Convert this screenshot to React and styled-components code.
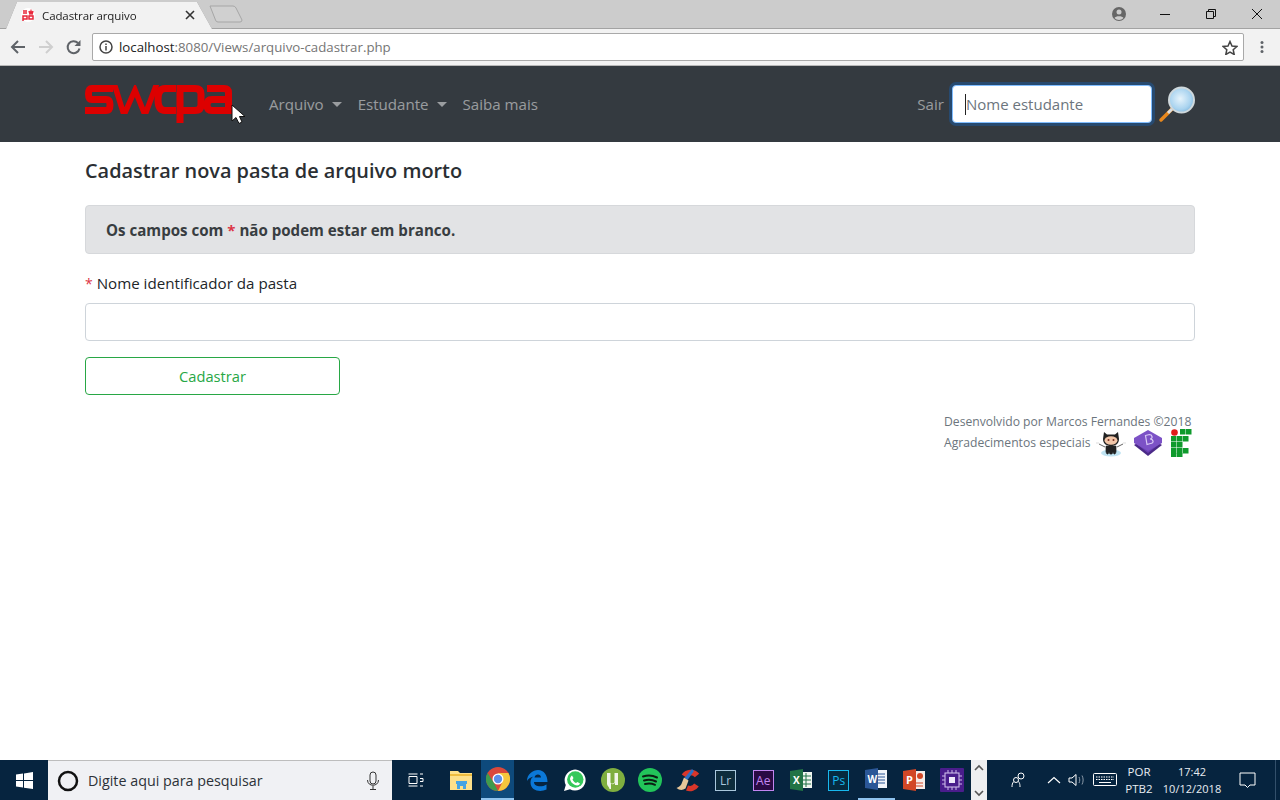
import React from "react";
import styled, { createGlobalStyle } from "styled-components";

const GlobalStyle = createGlobalStyle`
  html, body { margin: 0; padding: 0; height: 100%; background: #fff; }
  body { font-family: "Open Sans", "Noto Sans", sans-serif; color: #212529; }
  #root { height: 100%; }
  * { box-sizing: border-box; }
`;

const Page = styled.div`
  width: 1280px;
  height: 800px;
  display: flex;
  flex-direction: column;
  overflow: hidden;
  position: relative;
`;

/* browser chrome */
const TabStrip = styled.div`
  height: 29px;
  background: #cccccc;
  border-bottom: 1px solid #a3a3a3;
  display: flex;
  align-items: flex-end;
  padding-left: 6px;
  flex: none;
`;

const TabOutline = styled.div`
  margin-bottom: -1px;
  filter: drop-shadow(0 0 0.6px #777);
`;

const Tab = styled.div`
  width: 206px;
  height: 28px;
  background: #f2f2f2;
  clip-path: polygon(0 100%, 11px 1px, 191px 1px, 206px 100%);
  display: flex;
  align-items: center;
  padding: 0 17px 0 15px;
  font-size: 11.5px;
  color: #222;
`;

const TabTitle = styled.span`
  margin-left: 7px;
  flex: 1;
  letter-spacing: -0.1px;
`;

const NewTab = styled.svg`
  width: 38px;
  height: 20px;
  margin: 0 0 3px -3px;
`;

const WindowBtns = styled.div`
  margin-left: auto;
  align-self: stretch;
  display: flex;
  align-items: center;
`;

const WinBtn = styled.div`
  width: 46px;
  height: 27px;
  display: flex;
  align-items: center;
  justify-content: center;
`;

const Toolbar = styled.div`
  height: 37px;
  background: #f2f2f2;
  display: flex;
  align-items: center;
  flex: none;
  border-bottom: 1px solid #b8b8b8;
`;

const NavIcons = styled.div`
  width: 92px;
  display: flex;
  align-items: center;
  padding-left: 10px;
  gap: 12px;
`;

const Omnibox = styled.div`
  width: 1152px;
  height: 28px;
  background: #fff;
  border: 1px solid #a9a9a9;
  border-radius: 2px;
  display: flex;
  align-items: center;
  padding: 0 5px 0 6px;
  font-size: 13.25px;
  color: #757575;
`;

const UrlText = styled.span`
  margin-left: 6px;
  flex: 1;
`;

const UrlHost = styled.span`
  color: #222;
`;

const MenuDots = styled.div`
  flex: 1;
  display: flex;
  justify-content: center;
`;

/* site navbar */
const Navbar = styled.nav`
  height: 76px;
  background: #343a40;
  display: flex;
  align-items: center;
  padding: 0 85px;
  flex: none;
`;

const Brand = styled.svg`
  width: 150px;
  height: 44px;
  margin-right: 34px;
  flex: none;
`;

const NavLink = styled.a`
  color: rgba(255, 255, 255, 0.5);
  font-size: 15.1px;
  margin-right: ${(p) => p.$gap ?? 16}px;
  display: inline-flex;
  align-items: center;
`;

const Caret = styled.span`
  width: 0;
  height: 0;
  margin-left: 8px;
  border-top: 5px solid rgba(255, 255, 255, 0.5);
  border-left: 5px solid transparent;
  border-right: 5px solid transparent;
`;

const NavRight = styled.div`
  margin-left: auto;
  display: flex;
  align-items: center;
`;

const SearchInput = styled.div`
  width: 200px;
  height: 38px;
  margin: 0 5px 0 8px;
  background: #fff;
  border: 1px solid #80bdff;
  border-radius: 4px;
  box-shadow: 0 0 0 3px rgba(0, 123, 255, 0.25);
  display: flex;
  align-items: center;
  padding-left: 12px;
  font-size: 15px;
  color: #6c757d;
`;

const Cursor = styled.span`
  width: 1px;
  height: 21px;
  background: #222;
`;

const MousePointer = styled.svg`
  position: absolute;
  left: 231px;
  top: 104px;
`;

/* page content */
const Main = styled.main`
  flex: 1;
  padding: 16px 85px 0;
`;

const Title = styled.h1`
  margin: 0 0 21px;
  font-size: 19.9px;
  font-weight: 600;
  line-height: 26px;
  color: #2b2f33;
`;

const Alert = styled.div`
  height: 49px;
  background: #e2e3e5;
  border: 1px solid #d6d8db;
  border-radius: 4px;
  padding: 0 20px;
  display: flex;
  align-items: center;
  font-size: 15.1px;
  font-weight: 700;
  color: #383d41;
  white-space: pre;
`;

const Star = styled.span`
  color: #dc3545;
  font-size: ${(p) => (p.$bold ? 15 : 14)}px;
  font-weight: ${(p) => (p.$bold ? 700 : 400)};
`;

const Label = styled.label`
  display: block;
  margin: 17px 0 7px;
  font-size: 15.15px;
  line-height: 24px;
  white-space: pre;
`;

const TextInput = styled.div`
  height: 38px;
  background: #fff;
  border: 1px solid #ced4da;
  border-radius: 4px;
`;

const SubmitBtn = styled.button`
  display: block;
  width: 255px;
  height: 38px;
  margin-top: 16px;
  background: #fff;
  border: 1px solid #28a745;
  border-radius: 4px;
  color: #28a745;
  font: inherit;
  font-size: 14.7px;
`;

const Credits = styled.div`
  margin: 17px 3px 0 auto;
  width: 248px;
  font-size: 12.15px;
  line-height: 20px;
  color: #6c757d;
  white-space: nowrap;
`;

const ThanksRow = styled.div`
  display: flex;
  align-items: center;
  height: 24px;
  margin-top: -1px;
`;

const ThanksIcons = styled.div`
  margin-left: auto;
  display: flex;
  align-items: center;
  gap: 7px;
`;

/* windows taskbar */
const Taskbar = styled.div`
  height: 40px;
  background: #06243f;
  display: flex;
  align-items: stretch;
  flex: none;
`;

const StartBtn = styled.div`
  width: 48px;
  display: flex;
  align-items: center;
  justify-content: center;
`;

const SearchBox = styled.div`
  width: 344px;
  background: #f0f1f4;
  border-top: 1px solid #bdbdbd;
  display: flex;
  align-items: center;
  padding: 0 12px 0 9px;
  font-size: 14.3px;
  color: #2c3138;
`;

const SearchHint = styled.span`
  margin-left: 9px;
  flex: 1;
`;

const TaskIcons = styled.div`
  display: flex;
  align-items: stretch;
  padding-left: 4px;
  width: 579px;
`;

const TaskItem = styled.div`
  width: ${(p) => p.$w || 37.7}px;
  margin-left: ${(p) => p.$ml || 0}px;
  display: flex;
  align-items: center;
  justify-content: center;
  background: ${(p) => (p.$active ? "#0e4a7c" : "transparent")};
  border-bottom: ${(p) => (p.$open ? "2px solid #8fc3ee" : "none")};
`;

const Scroller = styled.div`
  width: 16px;
  background: #eeeff1;
  display: flex;
  flex-direction: column;
  align-items: center;
  justify-content: space-between;
  padding: 4px 0 3px;
`;

const Tray = styled.div`
  flex: 1;
  display: flex;
  align-items: center;
  color: #fff;
`;

const TrayText = styled.div`
  text-align: center;
  line-height: 17px;
  font-size: ${(p) => p.$size}px;
  width: ${(p) => p.$w}px;
  margin-left: 4px;
  flex: none;
  color: #e8edf2;
`;

const ShowDesktop = styled.div`
  margin-left: auto;
  width: 5px;
  align-self: stretch;
  border-left: 1px solid #33506b;
`;

const TileIcon = styled.div`
  width: 21px;
  height: 21px;
  display: flex;
  align-items: center;
  justify-content: center;
  border: 1.5px solid ${(p) => p.$c};
  background: ${(p) => p.$bg};
  color: ${(p) => p.$c};
  font-size: 12px;
`;

const Ic = ({ w = 24, h = 24, children, ...rest }) => (
  <svg width={w} height={h} viewBox={`0 0 ${w} ${h}`} {...rest}>
    {children}
  </svg>
);

const Favicon = () => (
  <Ic w={14} h={14}>
    <circle cx="7" cy="7" r="7" fill="#fff" />
    <path d="M2 3h4M2 5h4M8 3l1 3 1-3 1 3 1-3M2 8h4v3H2zM8 8h4v3H8zM2 11v2" stroke="#e8273a" strokeWidth="1.5" fill="none" />
  </Ic>
);

const SwcpaLogo = () => (
  <Brand viewBox="0 0 150 44">
    <defs>
      <clipPath id="logoBand">
        <rect x="0" y="3" width="150" height="29" />
      </clipPath>
    </defs>
    <g fill="none" stroke="#dd0000" strokeWidth="7">
      <path d="M28 6.500H7Q3.500 6.500 3.500 12T7 17.500H21Q25 17.500 25 23T21 28.500H0" />
      <path d="M29 1L39 33L50 8L60 33L72 1" strokeWidth="5.500" clipPath="url(#logoBand)" />
      <path d="M91 6.500H80Q73 6.500 73 17.500T80 28.500H91" />
      <path d="M95 41V6.500H110Q116 6.500 116 12V23Q116 28.500 110 28.500H95" />
      <path d="M122 6.500H139Q143.500 6.500 143.500 11V28.500H127Q122 28.500 122 23T127 17.500H143.500" />
    </g>
  </Brand>
);

const Magnifier = () => (
  <Ic w={38} h={38}>
    <defs>
      <radialGradient id="lens" cx="45%" cy="45%" r="60%">
        <stop offset="0%" stopColor="#e6f3fb" />
        <stop offset="70%" stopColor="#a9d3ef" />
        <stop offset="100%" stopColor="#7fb6dc" />
      </radialGradient>
    </defs>
    <path d="M4 35L15 24" stroke="#e8881d" strokeWidth="3.500" strokeLinecap="round" />
    <path d="M11 28L15 24" stroke="#d9dde0" strokeWidth="3" />
    <circle cx="24.500" cy="15" r="12.500" fill="url(#lens)" stroke="#cfd8dc" strokeWidth="2" />
  </Ic>
);

const Octocat = () => (
  <Ic w={30} h={28}>
    <ellipse cx="15" cy="24" rx="10" ry="3.500" fill="#bfe3f2" />
    <path d="M8 3l3 2.500h8L22 3l1 7c0 5-4 7-8 7s-8-2-8-7z" fill="#222" />
    <ellipse cx="15" cy="11.500" rx="6.500" ry="4.200" fill="#f2c6a8" />
    <circle cx="12.500" cy="11" r="1" fill="#7a2f22" />
    <circle cx="17.500" cy="11" r="1" fill="#7a2f22" />
    <path d="M10 17h10v6l-1 2h-1l-1-2-1 2h-2l-1-2-1 2h-1l-1-2zM3 15l6 3M27 15l-6 3" fill="#222" stroke="#222" strokeWidth="0.700" />
    <path d="M0 14h3M27 14h3" stroke="#ddd" />
  </Ic>
);

const BootstrapCube = () => (
  <Ic w={30} h={28}>
    <path d="M15 8L29 16L15 27L1 16z" fill="#4b2a88" />
    <path d="M15 5L29 13L15 24L1 13z" fill="#6a3fb5" />
    <path d="M15 1L29 9V14L15 22L1 14V9z" fill="#7c52c6" />
    <path d="M12.500 6.500l4-1q2 0 2.500 2t-2 2.500q2.500 0 3 2t-2.500 2.500l-3.500 1z" fill="none" stroke="#d9c9f5" strokeWidth="1.200" />
  </Ic>
);

const IfLogo = () => (
  <Ic w={22} h={28}>
    <circle cx="4.500" cy="3.500" r="3.300" fill="#e01a1a" />
    {[
      [10, 0], [16, 0],
      [1, 7], [7, 7], [13, 7],
      [1, 13], [7, 13],
      [1, 19], [7, 19], [13, 19],
      [1, 24], [7, 24],
    ].map(([x, y]) => (
      <rect key={`${x}-${y}`} x={x} y={y} width="5.500" height={y === 24 ? 4 : 5.500} fill="#0f9a2c" />
    ))}
  </Ic>
);

const WinLogo = () => (
  <Ic w={17} h={17}>
    <path d="M0 2.500L7 1.500V8H0zM8 1.400L17 0V8H8zM0 9h7v6.500L0 14.500zM8 9h9v8L8 15.700z" fill="#fff" />
  </Ic>
);

const Chevron = ({ up }) => (
  <Ic w={10} h={7}>
    <path d={up ? "M1 6L5 2L9 6" : "M1 1L5 5L9 1"} fill="none" stroke="#555" strokeWidth="1.600" />
  </Ic>
);

const Folder = () => (
  <Ic w={23} h={20}>
    <path d="M0 1h8l2 2h12v17H0z" fill="#fde08a" />
    <rect x="0" y="4" width="22" height="2" fill="#eebc3f" />
    <path d="M7 19v-5h-1v-3h11v3h-1v5h-3v-3h-3v3z" fill="#45a4e4" />
  </Ic>
);

const Chrome = () => (
  <Ic w={24} h={24}>
    <circle cx="12" cy="12" r="12" fill="#d9483b" />
    <path d="M12 24A12 12 0 0 1 1.600 6L8 16z" fill="#3f9b4d" />
    <path d="M12 24A12 12 0 0 0 22.400 6H12l4 10z" fill="#f5c63c" />
    <circle cx="12" cy="12" r="5.500" fill="#fff" />
    <circle cx="12" cy="12" r="4.200" fill="#5b8fe8" />
  </Ic>
);

const Edge = () => (
  <Ic w={22} h={22}>
    <path d="M1 12C1 5 7 1 12 1c6 0 9.500 5 9.500 12H8c0 5 8 5.500 12.500 2.500v5c-6 3-16 1.500-16-7 0-3 1-5 3-6-3 .5-5.500 2.500-6.500 4.500zM8.500 8.500h6.500c0-4-6-4-6.500 0z" fill="#0b78d7" fillRule="evenodd" />
  </Ic>
);

const Whatsapp = () => (
  <Ic w={22} h={22}>
    <path d="M0 22l1.800-6A10.500 10.500 0 1 1 6 20.300z" fill="#fff" />
    <circle cx="11.300" cy="10.500" r="8.200" fill="#35c85a" />
    <path d="M8 6.500l1.500 2.500-1 1.500c1 2 2 3 3.500 3.500l1.500-1 2.500 1.500c-.5 2-3 2.500-5 1.500-3-1.500-4.500-3.500-5-6 0-1.500 1-3 2-3.500z" fill="#fff" />
  </Ic>
);

const Utorrent = () => (
  <Ic w={24} h={24}>
    <circle cx="12" cy="12" r="12" fill="#7fae3f" />
    <path d="M6 5h3.500v9c0 2 3.500 2 4 0V5H17v12h-3v-2c-1.500 1.500-3 1.500-4 .5v5.500H8.500c0-2-2.500-3-2.500-5z" fill="#f2f5ea" />
  </Ic>
);

const Spotify = () => (
  <Ic w={24} h={24}>
    <circle cx="12" cy="12" r="12" fill="#22c45a" />
    <path d="M5 8.500c5-1.500 10-1 14 1M6 12.500c4-1 8.500-.8 12 1M7 16c3.500-.8 7-.6 10 .8" fill="none" stroke="#0b1e12" strokeWidth="2" strokeLinecap="round" />
  </Ic>
);

const CCleaner = () => (
  <Ic w={24} h={24}>
    <path d="M21 7.500A8 8 0 0 0 8 8M20.500 17A8 8 0 0 1 11 20" fill="none" stroke="#d9362a" strokeWidth="5.500" />
    <path d="M16 1l2 2-6.500 9-3-2z" fill="#2a6fc4" />
    <path d="M8 9.500l4.500 3-3 8c-3 2-6 2-9-.5 3-1 5-3 5.500-5.500z" fill="#e8c79a" />
  </Ic>
);

const WordIcon = () => (
  <Ic w={24} h={24}>
    <rect x="10" y="3" width="13" height="18" fill="#f0f4fa" />
    <path d="M13 7h8M13 10h8M13 13h8M13 16h8" stroke="#2b5797" />
    <path d="M1 3L14 1V23L1 21z" fill="#2b5797" />
    <text x="3.500" y="16" fill="#fff" fontSize="10" fontWeight="700" fontFamily="Open Sans">W</text>
  </Ic>
);

const PptIcon = () => (
  <Ic w={24} h={24}>
    <rect x="10" y="3" width="13" height="18" fill="#f6ece8" />
    <path d="M14 15h7M14 18h7" stroke="#d24726" />
    <circle cx="18" cy="8" r="3" fill="#d24726" />
    <path d="M1 3L14 1V23L1 21z" fill="#d24726" />
    <text x="4" y="16" fill="#fff" fontSize="11" fontWeight="700" fontFamily="Open Sans">P</text>
  </Ic>
);

const ExcelIcon = () => (
  <Ic w={24} h={24}>
    <rect x="10" y="4" width="13" height="16" fill="#f0f5f0" />
    <path d="M13 8h9M13 12h9M13 16h9M17 5v14" stroke="#217346" />
    <path d="M1 3L14 1V23L1 21z" fill="#217346" />
    <text x="4" y="16" fill="#fff" fontSize="10" fontWeight="700" fontFamily="Open Sans">X</text>
  </Ic>
);

const ChipIcon = () => (
  <Ic w={24} h={24}>
    <rect width="24" height="24" rx="1" fill="#4a1d8c" />
    <rect x="5" y="5" width="14" height="14" fill="none" stroke="#d8c9f0" />
    <rect x="9" y="9" width="6" height="6" fill="#f0e9fb" />
    <path d="M8 2v3M12 2v3M16 2v3M8 19v3M12 19v3M16 19v3M2 8h3M2 12h3M2 16h3M19 8h3M19 12h3M19 16h3" stroke="#cbb8ea" />
  </Ic>
);

export default function App() {
  return (
    <Page>
      <GlobalStyle />
      <TabStrip>
        <TabOutline>
          <Tab>
            <Favicon />
            <TabTitle>Cadastrar arquivo</TabTitle>
            <Ic w={10} h={10}>
              <path d="M1 1L9 9M9 1L1 9" stroke="#333" strokeWidth="1.600" />
            </Ic>
          </Tab>
        </TabOutline>
        <NewTab viewBox="0 0 38 20">
          <path d="M1 1H24Q26 1 27 3L33 15Q33 17 31 17H9Q7 17 6.500 15z" fill="#d0d0d0" stroke="#a6a6a6" />
        </NewTab>
        <WindowBtns>
          <Ic w={16} h={16} style={{ marginRight: 15 }}>
            <circle cx="8" cy="8" r="7" fill="#666" />
            <circle cx="8" cy="6" r="2.500" fill="#ccc" />
            <path d="M3.500 12c1-2.500 8-2.500 9 0-2 2.500-7 2.500-9 0z" fill="#ccc" />
          </Ic>
          <WinBtn>
            <Ic w={10} h={10}><path d="M0 5.500H10" stroke="#111" /></Ic>
          </WinBtn>
          <WinBtn>
            <Ic w={10} h={10}>
              <path d="M.5 2.500h7v7h-7zM2.500 2.500v-2h7v7h-2" fill="none" stroke="#111" />
            </Ic>
          </WinBtn>
          <WinBtn>
            <Ic w={10} h={10}><path d="M0 0L10 10M10 0L0 10" stroke="#111" /></Ic>
          </WinBtn>
        </WindowBtns>
      </TabStrip>

      <Toolbar>
        <NavIcons>
          <Ic w={16} h={16}>
            <path d="M15 8H2M8 2L2 8l6 6" fill="none" stroke="#5f6368" strokeWidth="2" />
          </Ic>
          <Ic w={16} h={16}>
            <path d="M1 8h13M8 2l6 6-6 6" fill="none" stroke="#cfcfcf" strokeWidth="2" />
          </Ic>
          <Ic w={16} h={16}>
            <path d="M13.500 9.500A6 6 0 1 1 12 4" fill="none" stroke="#5f6368" strokeWidth="2" />
            <path d="M14.500 1v6h-6z" fill="#5f6368" />
          </Ic>
        </NavIcons>
        <Omnibox>
          <Ic w={14} h={14}>
            <circle cx="7" cy="7" r="6" fill="none" stroke="#444" strokeWidth="1.500" />
            <path d="M7 6v4.500M7 3.500v1.500" stroke="#444" strokeWidth="1.500" />
          </Ic>
          <UrlText>
            <UrlHost>localhost</UrlHost>:8080/Views/arquivo-cadastrar.php
          </UrlText>
          <Ic w={16} h={15}>
            <path d="M8 1.500l2 4.500 4.800.5-3.600 3.200 1 4.800L8 12.200 3.800 14.500l1-4.800L1.200 6.500 6 6z" fill="none" stroke="#444" strokeWidth="1.500" />
          </Ic>
        </Omnibox>
        <MenuDots>
          <Ic w={4} h={14}>
            <circle cx="2" cy="2.500" r="1.500" fill="#5f6368" />
            <circle cx="2" cy="7" r="1.500" fill="#5f6368" />
            <circle cx="2" cy="11.500" r="1.500" fill="#5f6368" />
          </Ic>
        </MenuDots>
      </Toolbar>

      <Navbar>
        <SwcpaLogo />
        <NavLink>Arquivo<Caret /></NavLink>
        <NavLink>Estudante<Caret /></NavLink>
        <NavLink>Saiba mais</NavLink>
        <NavRight>
          <NavLink $gap={0}>Sair</NavLink>
          <SearchInput><Cursor />Nome estudante</SearchInput>
          <Magnifier />
        </NavRight>
      </Navbar>

      <Main>
        <Title>Cadastrar nova pasta de arquivo morto</Title>
        <Alert>Os campos com <Star $bold>*</Star> não podem estar em branco.</Alert>
        <Label><Star>*</Star> Nome identificador da pasta</Label>
        <TextInput />
        <SubmitBtn>Cadastrar</SubmitBtn>
        <Credits>
          Desenvolvido por Marcos Fernandes ©2018
          <ThanksRow>
            Agradecimentos especiais
            <ThanksIcons>
              <Octocat />
              <BootstrapCube />
              <IfLogo />
            </ThanksIcons>
          </ThanksRow>
        </Credits>
      </Main>

      <Taskbar>
        <StartBtn><WinLogo /></StartBtn>
        <SearchBox>
          <Ic w={22} h={22}>
            <circle cx="11" cy="11" r="9" fill="none" stroke="#111" strokeWidth="2.500" />
          </Ic>
          <SearchHint>Digite aqui para pesquisar</SearchHint>
          <Ic w={14} h={20}>
            <rect x="4" y="1" width="6" height="12" rx="3" fill="none" stroke="#333" />
            <path d="M1.500 9c0 7 11 7 11 0M7 15v3M4 18.500h6" fill="none" stroke="#333" />
          </Ic>
        </SearchBox>
        <TaskIcons>
          <TaskItem $w={38}>
            <Ic w={18} h={14}>
              <path d="M2.500 1h9M2.500 13h9M3 3.500h8v7H3zM14 1h3M14 5.500h3v3h-3M14 13h3" fill="none" stroke="#fff" />
            </Ic>
          </TaskItem>
          <TaskItem $w={38} $ml={8}><Folder /></TaskItem>
          <TaskItem $w={33} $ml={1} $active $open><Chrome /></TaskItem>
          <TaskItem $w={38} $ml={4}><Edge /></TaskItem>
          <TaskItem><Whatsapp /></TaskItem>
          <TaskItem><Utorrent /></TaskItem>
          <TaskItem><Spotify /></TaskItem>
          <TaskItem><CCleaner /></TaskItem>
          <TaskItem><TileIcon $c="#a9c7dc" $bg="#0d2c3c">Lr</TileIcon></TaskItem>
          <TaskItem><TileIcon $c="#c285f0" $bg="#2a0a44">Ae</TileIcon></TaskItem>
          <TaskItem><ExcelIcon /></TaskItem>
          <TaskItem><TileIcon $c="#18b8ee" $bg="#052a40">Ps</TileIcon></TaskItem>
          <TaskItem $open><WordIcon /></TaskItem>
          <TaskItem><PptIcon /></TaskItem>
          <TaskItem><ChipIcon /></TaskItem>
        </TaskIcons>
        <Scroller>
          <Chevron up />
          <Chevron />
        </Scroller>
        <Tray>
          <Ic w={18} h={18} style={{ marginLeft: 23 }}>
            <circle cx="11" cy="5" r="3" fill="none" stroke="#fff" />
            <path d="M2 16c0-5 2-6 4-6M10 16c0-4-1-5-2-6" fill="none" stroke="#fff" />
            <circle cx="6" cy="9" r="2.500" fill="#06243f" stroke="#fff" />
          </Ic>
          <Ic w={14} h={8} style={{ marginLeft: 19 }}>
            <path d="M1 7L7 1.500L13 7" fill="none" stroke="#fff" strokeWidth="1.200" />
          </Ic>
          <Ic w={18} h={14} style={{ marginLeft: 7 }}>
            <path d="M1 5h3l4-3.500v11L4 9H1z" fill="none" stroke="#fff" />
            <path d="M11 4c1 2 1 4 0 6M14 2.500c1.500 3 1.500 6 0 9" fill="none" stroke="#8a99a8" />
          </Ic>
          <Ic w={24} h={14} style={{ marginLeft: 7 }}>
            <rect x=".5" y=".5" width="23" height="12" rx="1" fill="none" stroke="#fff" />
            <path d="M3 4h18M3 6.500h18" stroke="#fff" strokeDasharray="1.500 1" />
            <path d="M6 9.500h12" stroke="#fff" />
          </Ic>
          <TrayText $w={36} $size={11.5}>POR<br />PTB2</TrayText>
          <TrayText $w={62} $size={11}>17:42<br />10/12/2018</TrayText>
          <Ic w={18} h={17} style={{ marginLeft: 16 }}>
            <path d="M1 1h15v12h-5l-2.500 2.500L6 13H1z" fill="none" stroke="#fff" />
          </Ic>
          <ShowDesktop />
        </Tray>
      </Taskbar>

      <MousePointer width="15" height="21" viewBox="0 0 15 21">
        <path d="M1 1V17L5 13.500L8 19.500L11 18L8.500 12.500H14z" fill="#fff" stroke="#111" />
      </MousePointer>
    </Page>
  );
}
